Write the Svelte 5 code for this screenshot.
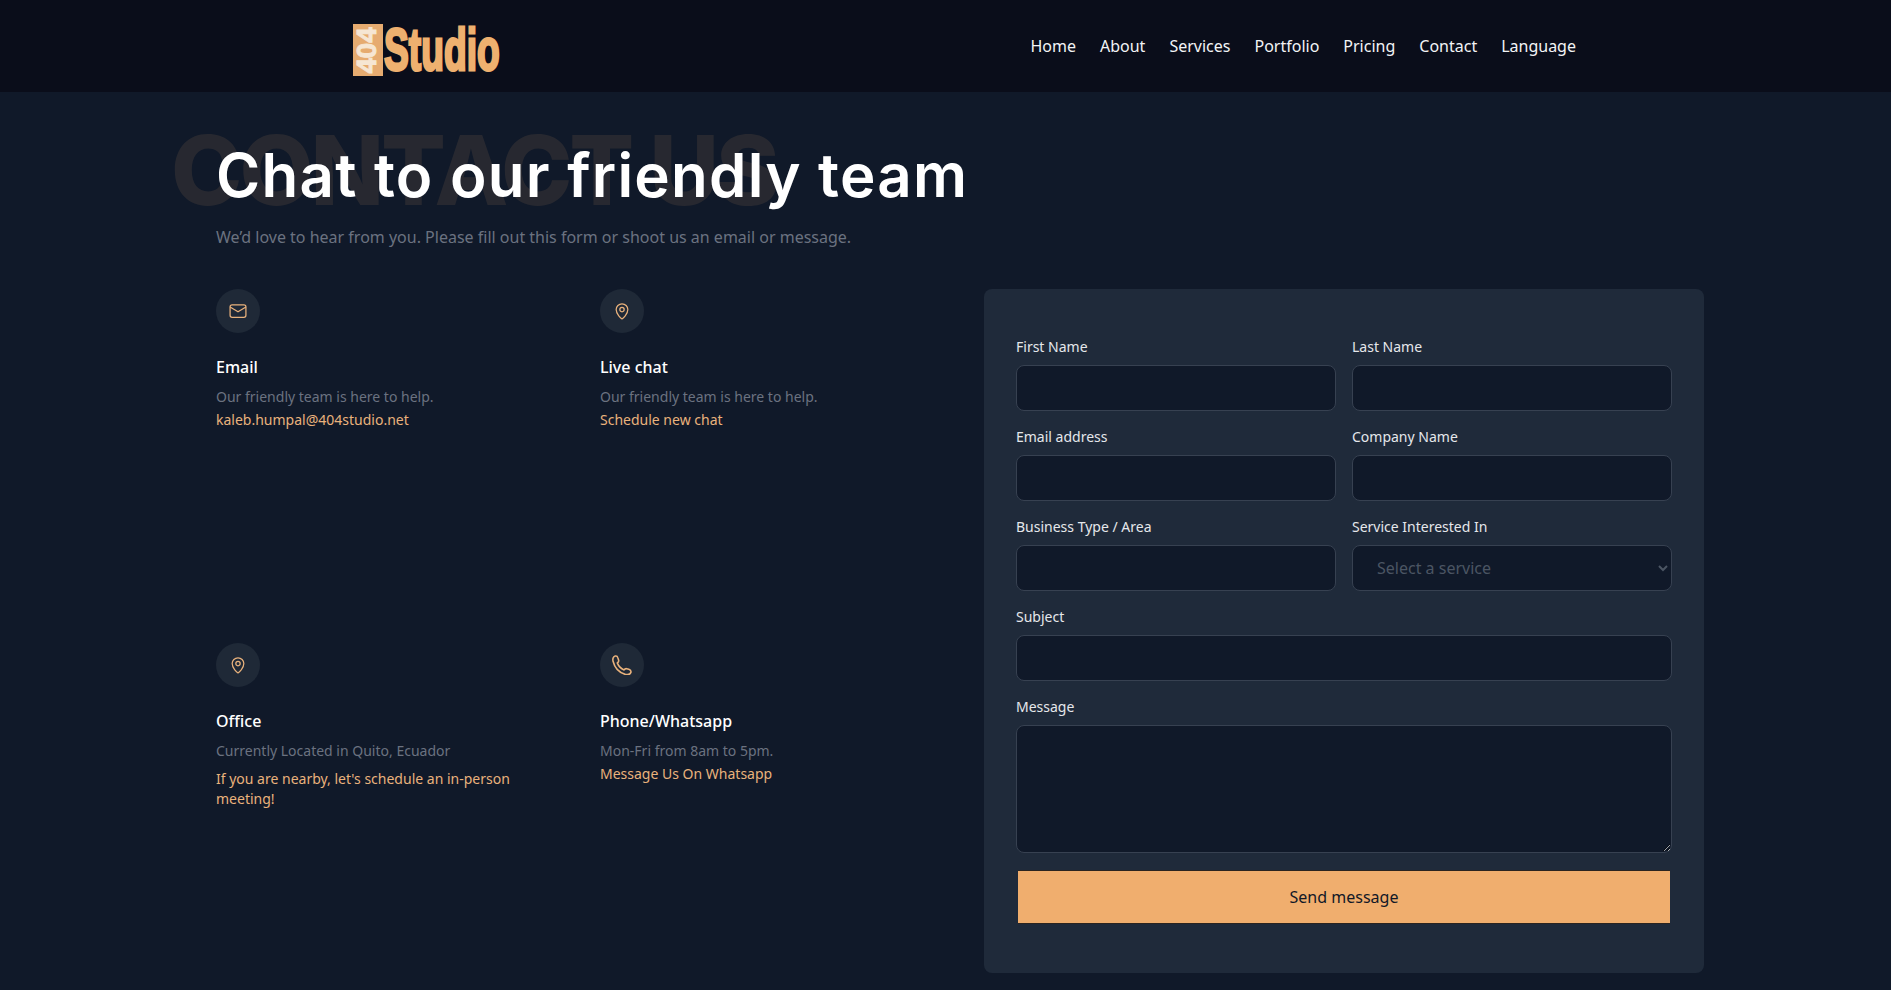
<script>
	const cards = [
		{ title: 'Email', text: 'Our friendly team is here to help.', link: 'kaleb.humpal@404studio.net', icon: 'mail' },
		{ title: 'Live chat', text: 'Our friendly team is here to help.', link: 'Schedule new chat', icon: 'pin' },
		{ title: 'Office', text: 'Currently Located in Quito, Ecuador', link: "If you are nearby, let's schedule an in-person meeting!", icon: 'pin', gap: true },
		{ title: 'Phone/Whatsapp', text: 'Mon-Fri from 8am to 5pm.', link: 'Message Us On Whatsapp', icon: 'phone' }
	]
	const nav = ['Home', 'About', 'Services', 'Portfolio', 'Pricing', 'Contact', 'Language']
</script>

<header>
	<div class="logo">
		<div class="logo-box"><span>404</span></div>
		<span class="logo-word">Studio</span>
	</div>
	<nav>
		{#each nav as item}
			<a href="#top">{item}</a>
		{/each}
	</nav>
</header>

<main>
	<div class="hero">
		<span class="ghost">CONTACT US</span>
		<h1>Chat to our friendly team</h1>
		<p>We’d love to hear from you. Please fill out this form or shoot us an email or message.</p>
	</div>

	<div class="columns">
		<div class="cards">
			{#each cards as card}
				<div class="card">
					<div class="icon">
						<svg width="20" height="20" viewBox={card.icon === 'phone' ? '3 2 19 19' : '0 0 24 24'} fill="none" stroke="#e9b27c" stroke-width="1.500" stroke-linecap="round" stroke-linejoin="round">
							{#if card.icon === 'mail'}
								<rect x="2.500" y="4.500" width="19" height="15" rx="2.500" />
								<path d="M3 7.500 12 13l9-5.500" />
							{:else if card.icon === 'pin'}
								<path d="M12 21.500c-1-.6-7-5.500-7-11.200a7 7 0 0 1 14 0c0 5.700-6 10.600-7 11.200z" />
								<circle cx="12" cy="10.300" r="2.600" />
							{:else}
								<path d="M6 3C4 3.500 3.500 6 4 8c1.500 6 6 11 12 12.500 2.500.5 4.500-.5 5-2 .3-1.500-.5-2.500-2-3l-2-.5c-1-.2-2 .3-2.500 1.200C11.500 15 9 12 8 9.500 9 9 9.500 8 9.300 7l-.8-2.500C8.200 3.300 7 2.800 6 3z" />
							{/if}
						</svg>
					</div>
					<h3>{card.title}</h3>
					<p class="muted">{card.text}</p>
					<p class="link" class:spaced={card.gap}>{card.link}</p>
				</div>
			{/each}
		</div>

		<form class="form" onsubmit={(e) => e.preventDefault()}>
			<div class="field">
				<label for="first">First Name</label>
				<input id="first" type="text" />
			</div>
			<div class="field">
				<label for="last">Last Name</label>
				<input id="last" type="text" />
			</div>
			<div class="field">
				<label for="email">Email address</label>
				<input id="email" type="email" />
			</div>
			<div class="field">
				<label for="company">Company Name</label>
				<input id="company" type="text" />
			</div>
			<div class="field">
				<label for="business">Business Type / Area</label>
				<input id="business" type="text" />
			</div>
			<div class="field">
				<label for="service">Service Interested In</label>
				<select id="service">
					<option>Select a service</option>
				</select>
			</div>
			<div class="field wide">
				<label for="subject">Subject</label>
				<input id="subject" type="text" />
			</div>
			<div class="field wide">
				<label for="message">Message</label>
				<textarea id="message"></textarea>
			</div>
			<button class="wide" type="submit">Send message</button>
		</form>
	</div>
</main>

<style>
	:global(body) {
		background: #101929;
		font-family: "Noto Sans", sans-serif;
		overflow: hidden;
	}

	header {
		height: 92px;
		background: #0a0d1a;
		display: flex;
		align-items: flex-start;
		justify-content: space-between;
		padding: 0 315px 0 353px;
		box-sizing: border-box;
	}

	.logo {
		display: flex;
		align-items: center;
		margin-top: 24px;
		height: 52px;
	}

	.logo-box {
		width: 30px;
		height: 52px;
		background: #e6ab70;
		display: flex;
		align-items: center;
		justify-content: center;
		overflow: hidden;
	}

	.logo-box span {
		display: block;
		font: 700 27px "Liberation Sans", sans-serif;
		color: #f6e6d3;
		transform: rotate(-90deg) scaleX(1.02);
		-webkit-text-stroke: 1px #f6e6d3;
	}

	.logo-word {
		display: block;
		font: 700 60px/52px "Liberation Sans", sans-serif;
		color: #eeb06f;
		transform: scaleX(0.62);
		transform-origin: left center;
		width: 116px;
		margin-left: 1px;
		-webkit-text-stroke: 3px #eeb06f;
	}

	nav {
		display: flex;
		gap: 24px;
		height: 92px;
		align-items: center;
	}

	nav a {
		color: #f3f4f6;
		font-size: 16px;
		text-decoration: none;
	}

	main {
		padding: 0 187px 0 216px;
	}

	.hero {
		position: relative;
		padding-top: 47px;
		height: 197px;
		box-sizing: border-box;
	}

	.ghost {
		position: absolute;
		left: -45px;
		top: 30px;
		font: 800 96px/1 "Inter", sans-serif;
		letter-spacing: -3px;
		color: #f0ae6e;
		opacity: 0.1;
		white-space: nowrap;
	}

	h1 {
		position: relative;
		margin: 0;
		font: 600 60px/72px "Inter", sans-serif;
		letter-spacing: 1.25px;
		color: #fff;
	}

	.hero p {
		position: relative;
		margin: 14px 0 0;
		font-size: 16px;
		line-height: 24px;
		color: #6b7280;
	}

	.columns {
		display: grid;
		grid-template-columns: 720px 720px;
		gap: 48px;
	}

	.cards {
		display: grid;
		grid-template-columns: 336px 336px;
		column-gap: 48px;
		row-gap: 24px;
		grid-auto-rows: 330px;
	}

	.icon {
		width: 44px;
		height: 44px;
		border-radius: 50%;
		background: #1f2937;
		display: flex;
		align-items: center;
		justify-content: center;
		margin-bottom: 20px;
	}

	h3 {
		margin: 0 0 6px;
		font-size: 16px;
		line-height: 28px;
		font-weight: 500;
		color: #fff;
	}

	.card p {
		margin: 0;
		font-size: 14px;
		line-height: 20px;
		width: 300px;
		padding-bottom: 3px;
	}

	.muted {
		color: #6b7280;
	}

	.link {
		color: #e9b27c;
	}

	.card p.link.spaced {
		margin-top: 5px;
	}

	.form {
		background: #1f2a3a;
		border-radius: 8px;
		padding: 32px;
		height: 684px;
		box-sizing: border-box;
		display: grid;
		grid-template-columns: 1fr 1fr;
		column-gap: 16px;
		align-content: start;
	}

	.wide {
		grid-column: 1 / -1;
	}

	.field {
		display: flex;
		flex-direction: column;
		height: 90px;
	}

	.field:has(textarea) {
		height: auto;
	}

	label {
		font-size: 14px;
		line-height: 20px;
		color: #e5e7eb;
		margin-top: 16px;
		margin-bottom: 8px;
	}

	input, select, textarea {
		height: 46px;
		box-sizing: border-box;
		background: #101929;
		border: 1px solid #374151;
		border-radius: 8px;
		color: #6b7280;
		font-family: "Noto Sans", sans-serif;
		font-size: 16px;
		outline: none;
		padding: 0 24px;
		width: 100%;
	}

	select {
		color: #4b5563;
		padding-left: 20px;
	}

	textarea {
		height: 128px;
		padding: 12px 24px;
		display: block;
	}

	button {
		margin: 17px 2px 0;
		height: 54px;
		background: #f0ae6e;
		border: 1px solid #2a2420;
		border-width: 1px 0;
		color: #111827;
		font-family: "Noto Sans", sans-serif;
		font-size: 16px;
		font-weight: 400;
	}
</style>
